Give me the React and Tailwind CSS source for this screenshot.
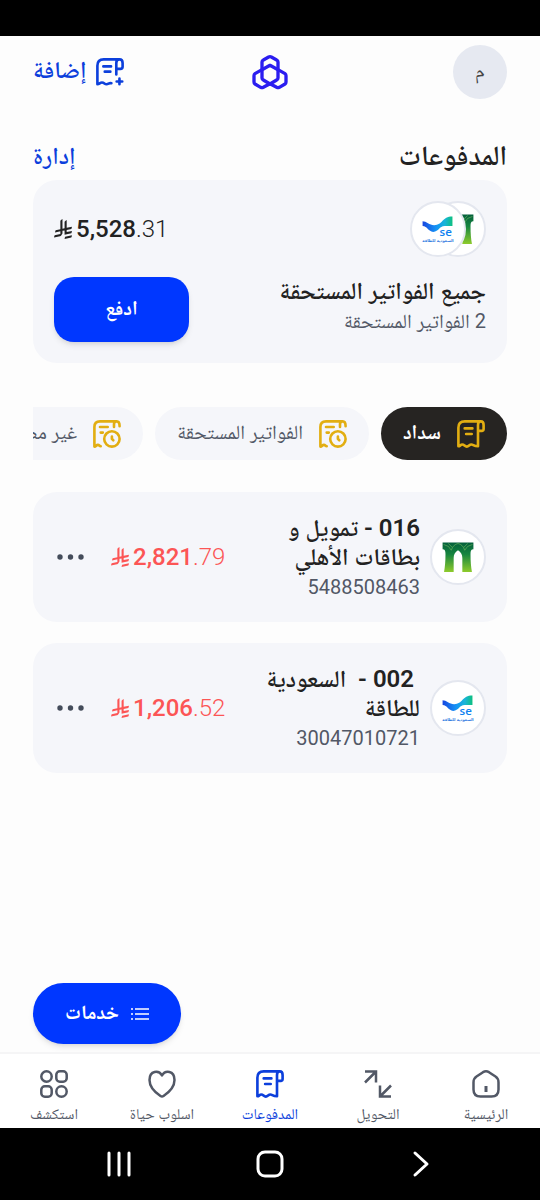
import React from "react";

const font = "font-['Roboto','Noto_Naskh_Arabic',serif]";

function RiyalSign({ className }) {
  return (
    <svg viewBox="0 0 1124 1257" fill="currentColor" className={className} aria-hidden="true">
      <path d="M699.6 1113c-20 44.500-33.300 92.800-38.400 143.400l424.500-90.200c20-44.500 33.300-92.800 38.400-143.400l-424.500 90.200Z" />
      <path d="M1085.730 895.800c20.060-44.470 33.320-92.750 38.400-143.370l-330.680 70.330v-135.200l292.270-62.110c20.060-44.470 33.320-92.750 38.400-143.370l-330.680 70.270V66.130c-50.670 28.450-95.670 66.320-132.250 110.990v403.350l-132.250 28.110V0c-50.670 28.440-95.670 66.320-132.250 110.990v525.690l-295.910 62.880c-20.060 44.470-33.330 92.750-38.420 143.370l334.330-71.050v170.260l-358.300 76.140c-20.060 44.470-33.320 92.750-38.400 143.370l375.040-79.700c30.530-6.350 56.770-24.400 73.830-49.240l68.780-101.990c7.140-10.550 11.300-23.270 11.300-36.970v-149.980l132.250-28.110v270.400l424.530-90.280Z" />
    </svg>
  );
}

function BillIcon() {
  return (
    <svg viewBox="0 0 80 80" fill="none" stroke="currentColor" strokeWidth="7.500" strokeLinecap="round" strokeLinejoin="round" className="size-7" aria-hidden="true">
      <path d="M68 4H22C10 4 4 10 4 22V75C9 75 10 70 15 70C21 70 22 76 28 76C34 76 35 70 41 70C47 70 47 75 60 75V14C60 7 63 4 68 4C74 4 76 8 76 14V26C76 29 75 31 72 31H61" />
      <path d="M22 24H44M26 40H42" />
    </svg>
  );
}

function BillClockIcon() {
  return (
    <svg viewBox="0 0 80 80" fill="none" stroke="currentColor" strokeWidth="7.500" strokeLinecap="round" strokeLinejoin="round" className="size-7" aria-hidden="true">
      <path d="M68 4H20C9 4 4 10 4 20V76C9 76 9 71 14 71C18 71 18 75 22 75M60 20V12C60 7 63 4 68 4C74 4 76 8 76 18" />
      <path d="M20 20H42M22 36H28" />
      <circle cx="54" cy="54" r="22" />
      <path d="M54 47V54L58 58" />
    </svg>
  );
}

function BillPlusIcon() {
  return (
    <svg viewBox="0 0 80 80" fill="none" stroke="currentColor" strokeWidth="7.500" strokeLinecap="round" strokeLinejoin="round" className="size-7" aria-hidden="true">
      <path d="M58 47V14C58 7 62 4 67 4H22C10 4 4 11 4 22V75C10 75 11 70 17 70C24 70 24 75 30 75C36 75 37 70 44 72M67 4C73 4 76 8 76 14V25C76 29 74 31 70 31H59" />
      <path d="M21 24H43M25 39H41M67 59V75M59 67H75" />
    </svg>
  );
}

function BrandLogo() {
  return (
    <svg viewBox="0 0 108 108" fill="none" stroke="#2b1df0" strokeWidth="10" strokeLinejoin="round" className="size-9" role="img" aria-label="مصرف">
      <path d="M54 34L74 45Q78 47 78 52V72Q78 76 74 78L54 90L34 78Q30 76 30 72V52Q30 47 34 45Z" />
      <path d="M30 48V24Q30 20 34 18L50 9Q54 7 58 9L74 18Q78 20 78 24V48" />
      <path d="M30 47L9 59Q6 61 6 65V84Q6 88 9 90L26 100Q30 102 34 100L54 89L74 100Q78 102 82 100L99 90Q102 88 102 84V65Q102 61 99 59L78 47" />
    </svg>
  );
}

function AhliLogo() {
  return (
    <svg viewBox="0 0 54 54" className="size-full" role="img" aria-label="الأهلي">
      <defs>
        <linearGradient id="ahli" x1="0" y1="0" x2="0" y2="1">
          <stop offset="0" stopColor="#05603c" />
          <stop offset="0.400" stopColor="#16853f" />
          <stop offset="1" stopColor="#8ecb2c" />
        </linearGradient>
      </defs>
      <path fill="url(#ahli)" d="M11 12H43V19C40.500 19 40 21 40 24C40 32 40.500 37 41.500 42.500H31.500V28C31.500 24 30 22 27 20C24 22 22.500 24 22.500 28V42.500H12.500C13.500 37 14 32 14 24C14 21 13.500 19 11 19Z" />
      <path d="M12 14Q18 15 20 20Q22 14 27 13Q32 14 34 20Q36 15 42 14M17 13L21 17M37 13L33 17" fill="none" stroke="#79bd62" strokeWidth="0.600" />
    </svg>
  );
}

function ElectricityLogo() {
  return (
    <svg viewBox="0 0 54 54" className="size-full" role="img" aria-label="السعودية للطاقة">
      <defs>
        <linearGradient id="wave" x1="0" y1="0" x2="1" y2="0">
          <stop offset="0" stopColor="#1746e0" />
          <stop offset="0.450" stopColor="#1593f5" />
          <stop offset="0.750" stopColor="#18b5d8" />
          <stop offset="1" stopColor="#0ec07e" />
        </linearGradient>
      </defs>
      <path fill="url(#wave)" d="M11 19C15 19 18 23 23 23C32 23 31 14 42 14V24H34C28 24 28 30 22 30C17 30 16 24 11 24Z" />
      <text x="35" y="34" fontSize="12" textAnchor="middle" fill="#0f82f0" className="font-['Open_Sans',sans-serif] font-semibold">se</text>
      <text x="27" y="40" fontSize="4" textAnchor="middle" fill="#2c78e0" className="font-['DejaVu_Sans',sans-serif] font-bold">السعودية للطاقة</text>
    </svg>
  );
}

function LogoBadge({ children, className = "" }) {
  return (
    <div className={`size-14 shrink-0 rounded-full border-2 border-[#e4e7ef] bg-white ${className}`}>
      {children}
    </div>
  );
}

function Amount({ whole, cents }) {
  return (
    <div dir="ltr" className="flex items-center gap-1 text-2xl leading-7">
      <RiyalSign className="h-5 w-[18px]" />
      <span>
        <span className="font-medium">{whole}</span>
        <span className="font-light">.{cents}</span>
      </span>
    </div>
  );
}

const tabs = [
  { label: "سداد", icon: <BillIcon />, active: true },
  { label: "الفواتير المستحقة", icon: <BillClockIcon /> },
  { label: "غير مضافة", icon: <BillClockIcon /> },
];

const bills = [
  {
    code: "016 -",
    first: " تمويل و",
    second: "بطاقات الأهلي",
    number: "5488508463",
    whole: "2,821",
    cents: "79",
    logo: <AhliLogo />,
  },
  {
    code: "\u00a0002 -\u00a0",
    first: " السعودية",
    second: "للطاقة",
    number: "30047010721",
    whole: "1,206",
    cents: "52",
    logo: <ElectricityLogo />,
  },
];

function BillCard({ bill }) {
  return (
    <li className="flex items-center rounded-3xl bg-[#f5f6fa] py-5 ps-[21px] pe-6">
      <LogoBadge>{bill.logo}</LogoBadge>
      <div className="ms-[10px] flex-1 pt-[2px] text-[#222]">
        <h3 className="text-2xl leading-[29px] font-semibold whitespace-nowrap">
          {bill.code}
          {bill.first}
          <br />
          {bill.second}
        </h3>
        <p className="text-xl leading-[30px] text-[#525866]">{bill.number}</p>
      </div>
      <div className="text-[#fc5555]">
        <Amount whole={bill.whole} cents={bill.cents} />
      </div>
      <button type="button" aria-label="خيارات" className="ms-[26px] text-[#444c5a]">
        <svg viewBox="0 0 28 28" fill="currentColor" className="size-7">
          <circle cx="3" cy="14" r="2.700" />
          <circle cx="13.500" cy="14" r="2.700" />
          <circle cx="24" cy="14" r="2.700" />
        </svg>
      </button>
    </li>
  );
}

const navStroke = {
  viewBox: "0 0 28 28",
  fill: "none",
  stroke: "currentColor",
  strokeWidth: 2.5,
  strokeLinejoin: "round",
  className: "size-7",
  "aria-hidden": true,
};

const navItems = [
  {
    label: "الرئيسية",
    icon: (
      <svg {...navStroke}>
        <path d="M11 2.200Q14 0.500 17 2.200L23.500 6.500Q26.500 8.500 26.500 12.500V19.500Q26.500 26.500 19.500 26.500H8.500Q1.500 26.500 1.500 19.500V12.500Q1.500 8.500 4.500 6.500Z" />
        <path d="M14 16V22" strokeWidth="3" />
      </svg>
    ),
  },
  {
    label: "التحويل",
    icon: (
      <svg {...navStroke} strokeLinejoin="miter">
        <path d="M1 1.500H12V12.500M12 1.500L1 12.500M16 15.500V26.500H27M16 26.500L27 15.500" />
      </svg>
    ),
  },
  { label: "المدفوعات", icon: <BillIcon />, active: true },
  {
    label: "اسلوب حياة",
    icon: (
      <svg {...navStroke}>
        <path d="M14 5.500C11 0 1.500 0 1.500 10C1.500 17 8 23 12.500 26Q14 27 15.500 26C20 23 26.500 17 26.500 10C26.500 0 17 0 14 5.500Z" />
      </svg>
    ),
  },
  {
    label: "استكشف",
    icon: (
      <svg {...navStroke}>
        <circle cx="6.500" cy="6.500" r="5.200" />
        <rect x="16.300" y="1.300" width="10.400" height="10.400" rx="3.500" />
        <rect x="1.300" y="16.300" width="10.400" height="10.400" rx="3.500" />
        <circle cx="21.500" cy="21.500" r="5.200" />
      </svg>
    ),
  },
];

export default function App() {
  return (
    <div dir="rtl" className={`flex min-h-screen flex-col bg-[#fdfdfd] text-[#222] ${font}`}>
      <div className="h-9 bg-black" />

      <header className="grid grid-cols-3 items-center px-[33px] pt-[9px]">
        <div className="flex size-[54px] items-center justify-center rounded-full bg-[#e6e9f1] pb-1 text-xl text-[#444]">م</div>
        <div className="flex justify-center">
          <BrandLogo />
        </div>
        <button type="button" className="flex items-center gap-[10px] justify-self-end text-2xl leading-8 font-semibold text-[#0c3fdc]">
          <BillPlusIcon />
          <span className="pb-1">إضافة</span>
        </button>
      </header>

      <main className="flex flex-1 flex-col px-[33px] pt-[41px]">
        <div className="flex h-10 items-center justify-between pb-2">
          <h1 className="text-[28px] leading-8 font-semibold">المدفوعات</h1>
          <a href="#manage" className="text-2xl leading-8 font-semibold text-[#0c3fdc]">إدارة</a>
        </div>

        <section className="rounded-3xl bg-[#f5f6fa] p-[21px]">
          <div className="flex items-center justify-between">
            <div className="flex">
              <LogoBadge>
                <AhliLogo />
              </LogoBadge>
              <LogoBadge className="-ms-9">
                <ElectricityLogo />
              </LogoBadge>
            </div>
            <Amount whole="5,528" cents="31" />
          </div>
          <div className="mt-5 flex items-center justify-between">
            <div className="pb-[6px]">
              <h2 className="text-2xl leading-[29px] font-semibold">جميع الفواتير المستحقة</h2>
              <p className="text-xl leading-[30px] text-[#525866]">2 الفواتير المستحقة</p>
            </div>
            <button type="button" className="h-[65px] w-[135px] rounded-[20px] bg-[#0037ff] pb-1 text-xl font-bold text-white shadow-md">
              ادفع
            </button>
          </div>
        </section>

        <div className="mt-11 flex gap-3 overflow-hidden">
          {tabs.map((tab) => (
            <button
              type="button"
              key={tab.label}
              className={`flex h-[53px] shrink-0 items-center gap-4 rounded-full px-[22px] text-xl whitespace-nowrap ${
                tab.active ? "bg-[#262422] font-bold text-white" : "bg-[#f5f6fa] text-[#525866]"
              }`}
            >
              <span className="text-[#e2ae12]">{tab.icon}</span>
              <span className="pb-1">{tab.label}</span>
            </button>
          ))}
        </div>

        <ul className="mt-8 flex flex-col gap-[21px]">
          {bills.map((bill) => (
            <BillCard key={bill.number} bill={bill} />
          ))}
        </ul>

        <button
          type="button"
          className="mt-auto mb-2 flex h-[61px] items-center gap-3 self-end rounded-full bg-[#0037ff] px-8 text-xl font-bold text-white shadow-md"
        >
          <svg viewBox="0 0 18 14" stroke="currentColor" strokeWidth="1.500" className="h-4 w-[18px]" aria-hidden="true">
            <path d="M4 2H18M4 7H18M4 12H18M0 2H2M0 7H2M0 12H2" />
          </svg>
          <span className="pb-1">خدمات</span>
        </button>
      </main>

      <nav className="grid h-19 grid-cols-5 border-t-2 border-[#f5f5f6] bg-white pt-4">
        {navItems.map((item) => (
          <a
            key={item.label}
            href="#nav"
            className={`flex flex-col items-center gap-1 text-[15px] leading-6 ${item.active ? "text-[#0c3fdc]" : "text-[#525866]"}`}
          >
            {item.icon}
            {item.label}
          </a>
        ))}
      </nav>

      <div dir="ltr" className="flex h-18 items-center justify-around bg-black px-11 text-white">
        <button type="button" aria-label="التطبيقات الأخيرة">
          <svg viewBox="0 0 28 28" stroke="currentColor" strokeWidth="3" strokeLinecap="round" className="size-7">
            <path d="M4 3V25M14 3V25M24 3V25" />
          </svg>
        </button>
        <button type="button" aria-label="الشاشة الرئيسية">
          <svg viewBox="0 0 28 28" fill="none" stroke="currentColor" strokeWidth="3" className="size-7">
            <rect x="2" y="2" width="24" height="24" rx="7" />
          </svg>
        </button>
        <button type="button" aria-label="رجوع">
          <svg viewBox="0 0 28 28" fill="none" stroke="currentColor" strokeWidth="3" strokeLinecap="round" strokeLinejoin="round" className="size-7">
            <path d="M8 3L20 14L8 25" />
          </svg>
        </button>
      </div>
    </div>
  );
}
